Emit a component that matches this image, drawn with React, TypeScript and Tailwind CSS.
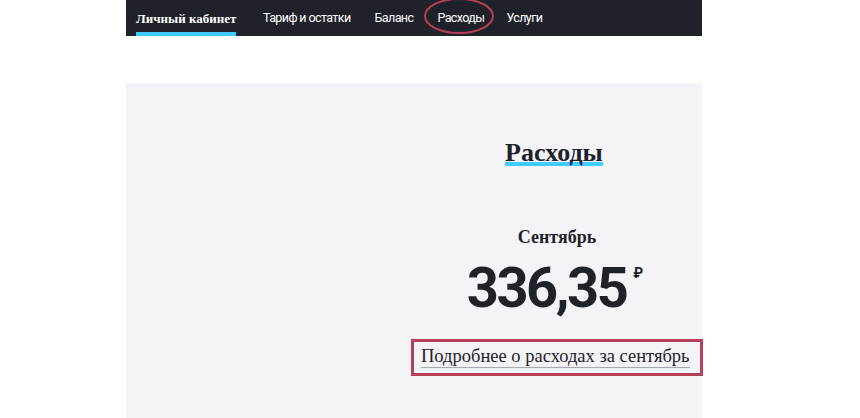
import React from "react";

export default function App() {
  const serif = { fontFamily: '"Liberation Serif", "DejaVu Serif", serif' };
  return (
    <div className="w-[860px] h-[418px] bg-white overflow-hidden">
      <div className="ml-[126px] w-[576px] h-full flex flex-col">
        {/* nav */}
        <nav className="h-[36px] bg-[#1f2229] flex items-stretch pl-[10px] text-white shrink-0">
          <div className="relative flex items-center w-[100px]" style={serif}>
            <span className="font-bold text-[13px] leading-none whitespace-nowrap">Личный кабинет</span>
            <div className="absolute left-0 right-0 bottom-0 h-[4px] bg-[#3fcbff]" />
          </div>
          <div
            className="flex items-center gap-[24px] ml-[27px] leading-none text-[12.5px]"
            style={{ fontFamily: 'Roboto, "Liberation Sans", sans-serif' }}
          >
            <span className="tracking-[-0.6px]">Тариф и остатки</span>
            <span className="tracking-[-0.6px]">Баланс</span>
            <span className="relative tracking-[-0.6px]">
              Расходы
              <span className="absolute left-[-13px] right-[-10px] top-[-14px] bottom-[-10px] rounded-[50%] border-2 border-[#b5405a]" />
            </span>
            <span className="tracking-[-0.6px] -ml-[2px]">Услуги</span>
          </div>
        </nav>
        <div className="h-[47px] shrink-0" />
        {/* panel */}
        <div className="flex-1 bg-[#f4f4f8] flex">
          <div className="ml-auto w-[292px] mr-[-1px] flex flex-col items-center pt-[60px] text-[#1f2229]">
            <h1
              className="inline-block text-[26px] font-bold leading-[19px] border-b-[4px] border-[#3fcbff] ml-[-6px]"
              style={serif}
            >
              Расходы
            </h1>
            <div className="mt-[62px] text-[18px] font-bold leading-none" style={serif}>
              Сентябрь
            </div>
            <div
              className="mt-[14px] flex items-start ml-[-4px]"
              style={{ fontFamily: 'Roboto, "Liberation Sans", sans-serif' }}
            >
              <span className="text-[56px] font-bold leading-[56px] tracking-[-2.5px]">336,35</span>
              <span className="text-[14px] font-bold leading-none mt-[6px] ml-[7px]">₽</span>
            </div>
            <div className="mt-[23px] w-full h-[37px] border-[3px] border-[#b5405a] pl-[7px] flex items-center">
              <span
                className="inline-block text-[18.5px] leading-[18px] border-b border-[#a8a8b0] pb-[2px]"
                style={serif}
              >
                Подробнее о расходах за сентябрь
              </span>
            </div>
          </div>
        </div>
      </div>
    </div>
  );
}
